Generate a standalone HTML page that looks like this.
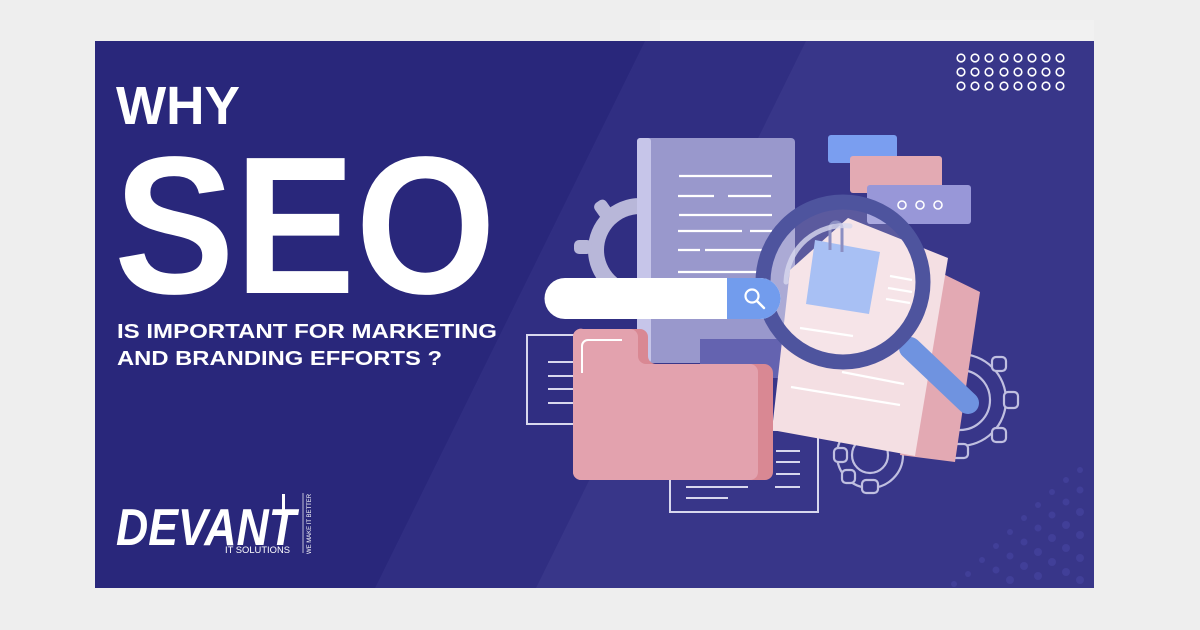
<!DOCTYPE html>
<html><head><meta charset="utf-8"><style>
html,body{margin:0;padding:0;background:#eeeeee;width:1200px;height:630px;overflow:hidden}
svg{display:block}
text{font-family:"Liberation Sans",sans-serif;font-weight:bold;fill:#fff}
</style></head><body>
<svg width="1200" height="630" viewBox="0 0 1200 630" xmlns="http://www.w3.org/2000/svg">
<rect width="1200" height="630" fill="#eeeeee"/>
<rect x="660" y="20" width="434" height="21" fill="#f1f1f1"/>
<rect x="95" y="41" width="999" height="547" fill="#29277b"/>
<polygon points="645,41 1094,41 1094,588 375,588" fill="#302e82"/>
<polygon points="806,41 1094,41 1094,588 536,588" fill="#383689"/>
<g fill="#413f98">
<circle cx="1080" cy="470" r="3"/><circle cx="1066" cy="480" r="3"/><circle cx="1080" cy="490" r="3.5"/>
<circle cx="1052" cy="492" r="3"/><circle cx="1066" cy="502" r="3.5"/><circle cx="1080" cy="512" r="4"/>
<circle cx="1038" cy="505" r="3"/><circle cx="1052" cy="515" r="3.5"/><circle cx="1066" cy="525" r="4"/><circle cx="1080" cy="535" r="4"/>
<circle cx="1024" cy="518" r="3"/><circle cx="1038" cy="528" r="3.5"/><circle cx="1052" cy="538" r="4"/><circle cx="1066" cy="548" r="4"/><circle cx="1080" cy="558" r="4"/>
<circle cx="1010" cy="532" r="3"/><circle cx="1024" cy="542" r="3.5"/><circle cx="1038" cy="552" r="4"/><circle cx="1052" cy="562" r="4"/><circle cx="1066" cy="572" r="4"/><circle cx="1080" cy="580" r="4"/>
<circle cx="996" cy="546" r="3"/><circle cx="1010" cy="556" r="3.5"/><circle cx="1024" cy="566" r="4"/><circle cx="1038" cy="576" r="4"/>
<circle cx="982" cy="560" r="3"/><circle cx="996" cy="570" r="3.5"/><circle cx="1010" cy="580" r="4"/><circle cx="968" cy="574" r="3"/><circle cx="954" cy="584" r="3"/>
</g>
<g fill="none" stroke="#fff" stroke-width="1.6">
<g id="row"><circle cx="961" cy="58" r="3.8"/><circle cx="975" cy="58" r="3.8"/><circle cx="989" cy="58" r="3.8"/><circle cx="1004" cy="58" r="3.8"/><circle cx="1018" cy="58" r="3.8"/><circle cx="1032" cy="58" r="3.8"/><circle cx="1046" cy="58" r="3.8"/><circle cx="1060" cy="58" r="3.8"/></g>
<use href="#row" y="14"/><use href="#row" y="28"/>
</g>
<text x="116" y="124" font-size="54" textLength="124" lengthAdjust="spacingAndGlyphs">WHY</text>
<text x="114" y="293" font-size="196" textLength="382" lengthAdjust="spacingAndGlyphs">SEO</text>
<text x="117" y="338" font-size="20" textLength="380" lengthAdjust="spacingAndGlyphs">IS IMPORTANT FOR MARKETING</text>
<text x="117" y="365" font-size="20" textLength="325" lengthAdjust="spacingAndGlyphs">AND BRANDING EFFORTS ?</text>
<text x="116" y="545" font-size="52" font-style="italic" textLength="180" lengthAdjust="spacingAndGlyphs" style="font-family:'Liberation Sans',sans-serif;font-weight:900">DEVANT</text>
<rect x="282" y="494" width="3" height="24" fill="#fff"/>
<text x="225" y="553" font-size="9" style="font-weight:normal" textLength="65" lengthAdjust="spacingAndGlyphs">IT SOLUTIONS</text>
<line x1="303" y1="493" x2="303" y2="553" stroke="#fff" stroke-width="0.7"/>
<text transform="translate(311,554) rotate(-90)" font-size="6" style="font-weight:normal" textLength="60" lengthAdjust="spacingAndGlyphs">WE MAKE IT BETTER</text>
<g fill="#b8b7d9">
<circle cx="640" cy="250" r="52"/>
<rect x="596" y="200" width="14" height="18" rx="5" transform="rotate(-35 603 209)"/>
<rect x="574" y="240" width="18" height="14" rx="5"/>
<rect x="596" y="282" width="14" height="18" rx="5" transform="rotate(35 603 291)"/>
</g>
<circle cx="640" cy="250" r="36" fill="#302e82"/>
<rect x="527" y="335" width="55" height="89" fill="none" stroke="#d8d8ee" stroke-width="2"/>
<g stroke="#d8d8ee" stroke-width="2"><line x1="548" y1="362" x2="580" y2="362"/><line x1="548" y1="376" x2="580" y2="376"/><line x1="548" y1="389" x2="580" y2="389"/><line x1="548" y1="403" x2="580" y2="403"/></g>
<rect x="670" y="430" width="148" height="82" fill="#383689" stroke="#d8d8ee" stroke-width="2"/>
<g stroke="#d8d8ee" stroke-width="2"><line x1="776" y1="451" x2="800" y2="451"/><line x1="776" y1="462" x2="800" y2="462"/><line x1="776" y1="474" x2="800" y2="474"/><line x1="686" y1="487" x2="748" y2="487"/><line x1="775" y1="487" x2="800" y2="487"/><line x1="686" y1="498" x2="728" y2="498"/></g>
<rect x="637" y="138" width="158" height="225" rx="4" fill="#9998cc"/>
<rect x="637" y="138" width="14" height="225" rx="3" fill="#c6c5e9"/>
<path d="M700 339 H826 V370 a8 8 0 0 1 -8 8 H700 Z" fill="#6463b0"/>
<g stroke="#fff" stroke-width="2.2"><line x1="679" y1="176" x2="772" y2="176"/><line x1="678" y1="196" x2="714" y2="196"/><line x1="728" y1="196" x2="771" y2="196"/><line x1="679" y1="215" x2="772" y2="215"/><line x1="678" y1="231" x2="742" y2="231"/><line x1="750" y1="231" x2="772" y2="231"/><line x1="678" y1="250" x2="700" y2="250"/><line x1="705" y1="250" x2="772" y2="250"/><line x1="678" y1="272" x2="760" y2="272"/></g>
<g fill="none" stroke="#c0bfe0" stroke-width="2.2">
<circle cx="960" cy="400" r="46"/><circle cx="960" cy="400" r="30"/>
<circle cx="870" cy="455" r="33"/><circle cx="870" cy="455" r="18"/>
</g>
<g fill="#383689" stroke="#c0bfe0" stroke-width="2.2">
<rect x="952" y="342" width="16" height="14" rx="4"/><rect x="1004" y="392" width="14" height="16" rx="4"/><rect x="952" y="444" width="16" height="14" rx="4"/><rect x="992" y="357" width="14" height="14" rx="4"/><rect x="992" y="428" width="14" height="14" rx="4"/>
<rect x="862" y="480" width="16" height="13" rx="4"/><rect x="834" y="448" width="13" height="14" rx="4"/><rect x="842" y="470" width="13" height="13" rx="4"/>
</g>
<polygon points="935,270 980,292 955,462 900,455" fill="#e3a9b3"/>
<polygon points="848,218 948,258 915,456 772,430 790,270" fill="#f4dfe3"/>
<g stroke="#fff" stroke-width="2.2"><line x1="800" y1="328" x2="853" y2="336"/><line x1="842" y1="372" x2="904" y2="384"/><line x1="791" y1="387" x2="900" y2="405"/><line x1="890" y1="276" x2="912" y2="280"/><line x1="888" y1="288" x2="912" y2="292"/><line x1="886" y1="299" x2="910" y2="303"/></g>
<polygon points="815,240 880,252 869,314 806,304" fill="#95b3f2"/>
<path d="M830 250 v-22 a6 6 0 0 1 12 0 v24" fill="none" stroke="#7276b5" stroke-width="3"/>
<rect x="828" y="135" width="69" height="28" rx="3" fill="#7a9ef0"/>
<rect x="850" y="156" width="92" height="37" rx="3" fill="#e3aab3"/>
<rect x="867" y="185" width="104" height="39" rx="3" fill="#9897d8"/>
<g fill="none" stroke="#fff" stroke-width="1.6"><circle cx="902" cy="205" r="4"/><circle cx="920" cy="205" r="4"/><circle cx="938" cy="205" r="4"/></g>
<line x1="910" y1="348" x2="968" y2="403" stroke="#6f93e0" stroke-width="22" stroke-linecap="round"/>
<circle cx="843" cy="282" r="80" fill="#ffffff" fill-opacity="0.18" stroke="#4e549e" stroke-width="15"/>
<path d="M786 282 a58 58 0 0 1 64 -56" fill="none" stroke="#d8d8ee" stroke-width="5" stroke-linecap="round" opacity="0.8"/>
<path d="M565 278 H760 a20.5 20.5 0 0 1 0 41 H565 a20.5 20.5 0 0 1 0 -41Z" fill="#fff"/>
<path d="M727 278 H760 a20.5 20.5 0 0 1 0 41 H727Z" fill="#729ced"/>
<circle cx="752" cy="296" r="6.5" fill="none" stroke="#fff" stroke-width="2.2"/>
<line x1="757" y1="301" x2="764" y2="308" stroke="#fff" stroke-width="2.4" stroke-linecap="round"/>
<path d="M583 329 H640 a8 8 0 0 1 8 8 V356 a8 8 0 0 0 8 8 H764 a9 9 0 0 1 9 9 V472 a8 8 0 0 1 -8 8 H581 a8 8 0 0 1 -8 -8 V337 a8 8 0 0 1 10 -8Z" fill="#d98893"/>
<path d="M583 329 H630 a8 8 0 0 1 8 8 V356 a8 8 0 0 0 8 8 H750 a8 8 0 0 1 8 8 V472 a8 8 0 0 1 -8 8 H581 a8 8 0 0 1 -8 -8 V337 a8 8 0 0 1 10 -8Z" fill="#e3a2ae"/>
<path d="M582 373 V346 a6 6 0 0 1 6 -6 H622" fill="none" stroke="#fff" stroke-width="2"/>
</svg>
</body></html>
